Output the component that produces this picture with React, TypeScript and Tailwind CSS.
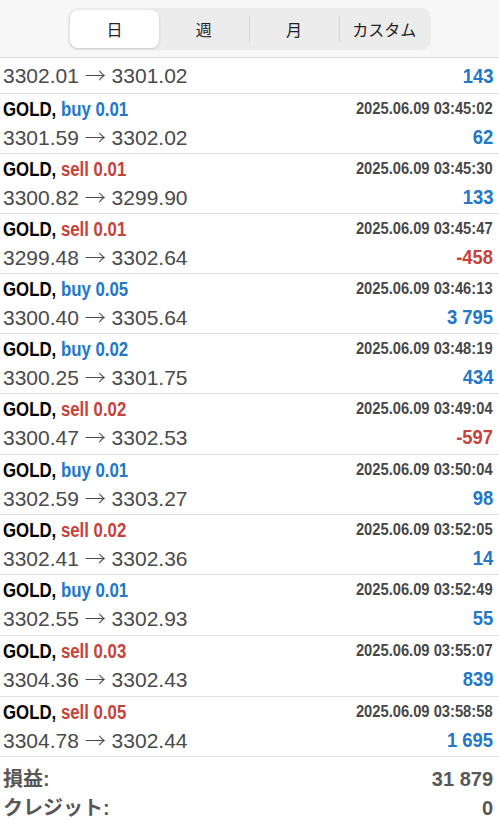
import React from 'react';

type Trade = {
  side: 'buy' | 'sell';
  lot: string;
  time: string;
  open: string;
  close: string;
  profit: string;
};

const trades: Trade[] = [
  { side: 'buy', lot: '0.01', time: '2025.06.09 03:45:02', open: '3301.59', close: '3302.02', profit: '62' },
  { side: 'sell', lot: '0.01', time: '2025.06.09 03:45:30', open: '3300.82', close: '3299.90', profit: '133' },
  { side: 'sell', lot: '0.01', time: '2025.06.09 03:45:47', open: '3299.48', close: '3302.64', profit: '-458' },
  { side: 'buy', lot: '0.05', time: '2025.06.09 03:46:13', open: '3300.40', close: '3305.64', profit: '3 795' },
  { side: 'buy', lot: '0.02', time: '2025.06.09 03:48:19', open: '3300.25', close: '3301.75', profit: '434' },
  { side: 'sell', lot: '0.02', time: '2025.06.09 03:49:04', open: '3300.47', close: '3302.53', profit: '-597' },
  { side: 'buy', lot: '0.01', time: '2025.06.09 03:50:04', open: '3302.59', close: '3303.27', profit: '98' },
  { side: 'sell', lot: '0.02', time: '2025.06.09 03:52:05', open: '3302.41', close: '3302.36', profit: '14' },
  { side: 'buy', lot: '0.01', time: '2025.06.09 03:52:49', open: '3302.55', close: '3302.93', profit: '55' },
  { side: 'sell', lot: '0.03', time: '2025.06.09 03:55:07', open: '3304.36', close: '3302.43', profit: '839' },
  { side: 'sell', lot: '0.05', time: '2025.06.09 03:58:58', open: '3304.78', close: '3302.44', profit: '1 695' },
];

// rows in the screenshot aren't quite a round 60px each
const tallRows = [5, 8, 9];

// condensed bold look: Arial-metric bold squeezed horizontally
const cond = "inline-block whitespace-nowrap font-['Liberation_Sans',sans-serif] font-bold";
const plain = "font-['Liberation_Sans','Noto_Sans_CJK_JP',sans-serif]";

const Profit: React.FC<{ value: string }> = ({ value }) => (
  <span
    className={`${cond} scale-x-[0.92] origin-right text-[20px] ${
      value.startsWith('-') ? 'text-[#c4433a]' : 'text-[#2277c8]'
    }`}
  >
    {value}
  </span>
);

const PriceLine: React.FC<{ open: string; close: string; profit: string }> = ({ open, close, profit }) => (
  <div className="flex items-center justify-between h-[30px]">
    <span className={`${plain} text-[21px] text-[#4a4a4a] whitespace-nowrap`}>
      {open} <span className="font-['Noto_Sans_CJK_JP',sans-serif] font-light">→</span> {close}
    </span>
    <Profit value={profit} />
  </div>
);

const TradeRow: React.FC<{ t: Trade; tall: boolean }> = ({ t, tall }) => (
  <div className={`${tall ? 'h-[61px]' : 'h-[60px]'} border-b border-[#e2e2e2] pl-[3px] pr-[6px] pt-[1px]`}>
    <div className="flex items-center justify-between h-[27px]">
      <span className={`${cond} scale-x-[0.84] origin-left text-[20px] text-black`}>
        GOLD,{' '}
        <span className={t.side === 'buy' ? 'text-[#2277c8]' : 'text-[#c4433a]'}>
          {t.side} {t.lot}
        </span>
      </span>
      <span className={`${cond} scale-x-[0.92] origin-right text-[16px] text-[#474747]`}>{t.time}</span>
    </div>
    <PriceLine open={t.open} close={t.close} profit={t.profit} />
  </div>
);

const tabs = ['日', '週', '月', 'カスタム'];

export default function App() {
  return (
    <div className="w-[499px] h-[820px] overflow-hidden bg-white">
      <div className="h-[58px] bg-[#f7f7f7] border-b border-[#dcdcdc] flex items-center justify-center">
        <div className="w-[363px] h-[42px] rounded-[10px] bg-[#ececec] p-[2px] flex items-center">
          {tabs.map((tab, i) => (
            <React.Fragment key={tab}>
              {i === 2 || i === 3 ? <div className="w-px h-[26px] bg-[#d2d2d2]" /> : null}
              <div
                className={`flex-1 h-full flex items-center justify-center font-['Noto_Sans_CJK_JP',sans-serif] text-[16px] text-[#222] ${
                  i === 0 ? 'bg-white rounded-[8px] shadow-[0_1px_3px_rgba(0,0,0,0.15)]' : ''
                }`}
              >
                {tab}
              </div>
            </React.Fragment>
          ))}
        </div>
      </div>

      <div className="h-[36px] border-b border-[#e2e2e2] pl-[3px] pr-[6px] flex flex-col justify-center">
        <PriceLine open="3302.01" close="3301.02" profit="143" />
      </div>

      {trades.map((t, i) => (
        <TradeRow key={t.time} t={t} tall={tallRows.includes(i)} />
      ))}

      <div className={`${plain} font-bold text-[20px] text-[#575757] pl-[3px] pr-[6px] pt-[7px]`}>
        <div className="flex justify-between h-[29px] items-center">
          <span>損益:</span>
          <span>31 879</span>
        </div>
        <div className="flex justify-between h-[29px] items-center">
          <span>クレジット:</span>
          <span>0</span>
        </div>
      </div>
    </div>
  );
}
